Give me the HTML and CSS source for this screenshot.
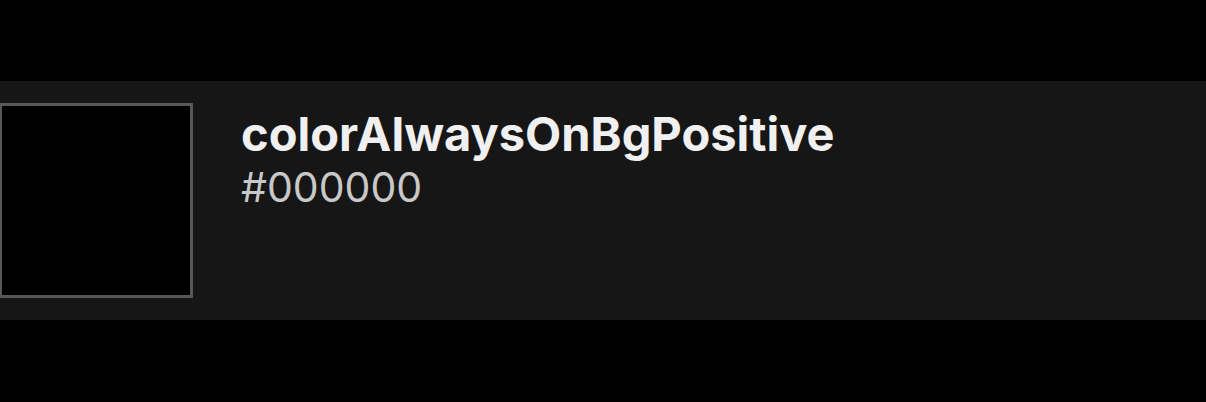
FILE: index.html
```html
<!DOCTYPE html>
<html>
<head>
<meta charset="utf-8">
<link rel="stylesheet" href="styles.css">
</head>
<body>
<div class="page">
  <div class="row">
    <div class="swatch"></div>
    <div class="info">
      <div class="name">colorAlwaysOnBgPositive</div>
      <div class="hex">#000000</div>
    </div>
  </div>
</div>
</body>
</html>
```
FILE: styles.css
```css
html, body {
  margin: 0;
  padding: 0;
  background: #000;
}
.page {
  width: 1206px;
  height: 402px;
  padding-top: 81px;
  box-sizing: border-box;
  background: #000;
}
.row {
  display: flex;
  align-items: flex-start;
  height: 239px;
  background: #161616;
  padding-top: 22px;
  box-sizing: border-box;
}
.swatch {
  width: 194px;
  height: 195px;
  margin-left: -1px;
  box-sizing: border-box;
  border: 3px solid #575757;
  background: #000;
  flex: none;
}
.info {
  margin-left: 48px;
  display: flex;
  flex-direction: column;
  font-family: Inter, "Noto Sans", sans-serif;
}
.name {
  font-size: 47px;
  font-weight: 700;
  color: #f0f0f0;
  line-height: 50px;
  margin-top: 6px;
}
.hex {
  font-size: 41px;
  font-weight: 400;
  color: #c8c8c8;
  line-height: 50px;
  margin-top: 3px;
}
```
